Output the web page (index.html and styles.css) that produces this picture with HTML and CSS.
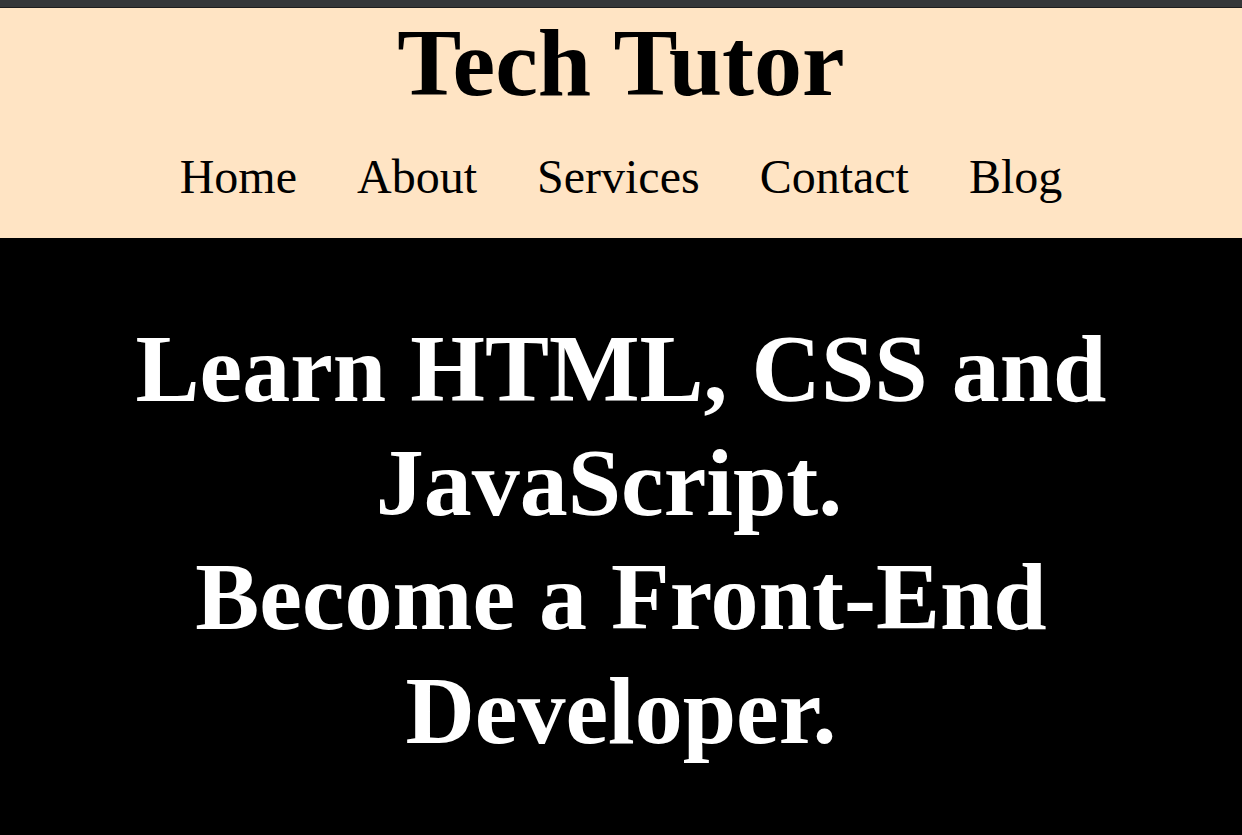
FILE: index.html
```html
<!DOCTYPE html>
<html lang="en">
<head>
<meta charset="utf-8">
<title>Tech Tutor</title>
<link rel="stylesheet" href="styles.css">
</head>
<body>
<div class="topbar"></div>
<header class="site-header">
  <h1 class="brand">Tech Tutor</h1>
  <nav class="nav">
    <a href="#">Home</a>
    <a href="#">About</a>
    <a href="#">Services</a>
    <a href="#">Contact</a>
    <a href="#">Blog</a>
  </nav>
</header>
<section class="hero">
  <h2 class="hero-title">Learn HTML, CSS and JavaScript.&nbsp;<br>Become a Front-End Developer.</h2>
</section>
</body>
</html>
```
FILE: styles.css
```css
html, body {
  margin: 0;
  padding: 0;
  background: #000;
  font-family: "Liberation Serif", "Times New Roman", serif;
}
.topbar {
  height: 7px;
  background: #353739;
  border-bottom: 1px solid #1d1d1d;
}
.site-header {
  background: #ffe4c4;
  text-align: center;
  padding: 0 0 34px;
}
.brand {
  margin: 0;
  font-size: 96px;
  font-weight: bold;
  line-height: 110px;
  color: #000;
}
.nav {
  margin-top: 31px;
  display: flex;
  justify-content: center;
  gap: 60px;
  font-size: 48px;
  line-height: 55px;
}
.nav a {
  color: #000;
  text-decoration: none;
}
.hero {
  background: #000;
  padding: 74px 40px 60px;
  text-align: center;
}
.hero-title {
  margin: 0;
  color: #fff;
  font-size: 96px;
  font-weight: bold;
  line-height: 114px;
}
```
